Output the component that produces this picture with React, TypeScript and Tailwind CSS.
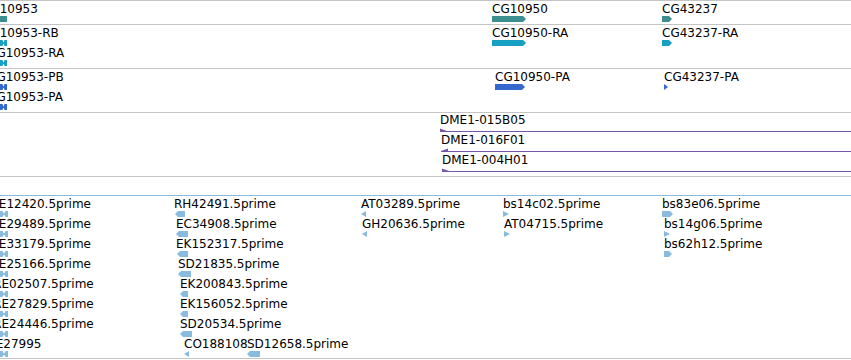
import React from 'react';

type Shape = 'block' | 'right' | 'left' | 'bow' | 'triR' | 'triL';

type Feat = {
    label: string;
    x: number; // bar start
    w: number; // bar width
    row: number;
    shape: Shape;
    lx?: number; // label start when it differs from the bar
};

const PAGE_W = 851;

const Glyph = ({ shape, w, color }: { shape: Shape; w: number; color: string }) => {
    const h = 6;
    const m = h / 2;
    if (shape === 'bow') {
        return (
            <svg width={w} height={h} className="block">
                <polygon points={`0,0 2.5,0 ${w / 2},${m} 2.5,${h} 0,${h}`} fill={color} />
                <polygon points={`${w},0 ${w - 2.5},0 ${w / 2},${m} ${w - 2.5},${h} ${w},${h}`} fill={color} />
                <rect x={0} y={m - 0.5} width={w} height={1.5} fill={color} />
            </svg>
        );
    }
    let pts = `0,0 ${w},0 ${w},${h} 0,${h}`;
    if (shape === 'right') pts = `0,0 ${w - 3},0 ${w},${m} ${w - 3},${h} 0,${h}`;
    if (shape === 'left') pts = `3,0 ${w},0 ${w},${h} 3,${h} 0,${m}`;
    if (shape === 'triR') pts = `0,0 ${w},${m} 0,${h}`;
    if (shape === 'triL') pts = `${w},0 0,${m} ${w},${h}`;
    return (
        <svg width={w} height={h} className="block">
            <polygon points={pts} fill={color} />
        </svg>
    );
};

// features sit at their genomic x inside a 20px row
const FeatureTrack = ({ feats, color, height, rows, gapCls = 'mt-0', border = 'border-[#c4c4c4]' }: {
    feats: Feat[];
    color: string;
    height: string;
    rows: number;
    gapCls?: string;
    border?: string;
}) => (
    <div className={`flex flex-col overflow-hidden border-t pt-px ${border} ${height}`}>
        {Array.from({ length: rows }, (_, r) => (
            <div key={r} className="relative h-[20px] shrink-0">
                {feats.filter((f) => f.row === r).map((f, i) => (
                    <div key={i} className="absolute top-0 flex flex-col items-start" style={{ left: f.x }}>
                        <span
                            className="whitespace-nowrap text-[12px] leading-[14px] text-black"
                            style={{ marginLeft: (f.lx ?? f.x) - f.x }}
                        >
                            {f.label}
                        </span>
                        <div className={gapCls}>
                            <Glyph shape={f.shape} w={f.w} color={color} />
                        </div>
                    </div>
                ))}
            </div>
        ))}
    </div>
);

const genes: Feat[] = [
    { label: 'CG10953', x: 0, w: 7, row: 0, shape: 'block', lx: -18 },
    { label: 'CG10950', x: 492, w: 34, row: 0, shape: 'right' },
    { label: 'CG43237', x: 662, w: 10, row: 0, shape: 'right' },
];

const transcripts: Feat[] = [
    { label: 'CG10953-RB', x: 0, w: 7, row: 0, shape: 'bow', lx: -18 },
    { label: 'CG10953-RA', x: 0, w: 7, row: 1, shape: 'bow', lx: -12 },
    { label: 'CG10950-RA', x: 492, w: 34, row: 0, shape: 'right' },
    { label: 'CG43237-RA', x: 662, w: 10, row: 0, shape: 'right' },
];

const proteins: Feat[] = [
    { label: 'CG10953-PB', x: 0, w: 7, row: 0, shape: 'bow', lx: -12 },
    { label: 'CG10953-PA', x: 0, w: 7, row: 1, shape: 'bow', lx: -12 },
    { label: 'CG10950-PA', x: 495, w: 30, row: 0, shape: 'right' },
    { label: 'CG43237-PA', x: 664, w: 4, row: 0, shape: 'triR' },
];

const clones = [
    { label: 'DME1-015B05', x: 440, dir: 'r' },
    { label: 'DME1-016F01', x: 441, dir: 'l' },
    { label: 'DME1-004H01', x: 442, dir: 'r' },
];

const ests: Feat[] = [
    { label: 'RE12420.5prime', x: 0, w: 8, row: 0, shape: 'bow', lx: -9.5 },
    { label: 'RE29489.5prime', x: 0, w: 8, row: 1, shape: 'bow', lx: -9.5 },
    { label: 'RE33179.5prime', x: 0, w: 8, row: 2, shape: 'bow', lx: -9.5 },
    { label: 'RE25166.5prime', x: 0, w: 8, row: 3, shape: 'bow', lx: -9.5 },
    { label: 'RE02507.5prime', x: 0, w: 8, row: 4, shape: 'bow', lx: -6.8 },
    { label: 'RE27829.5prime', x: 0, w: 8, row: 5, shape: 'bow', lx: -6.8 },
    { label: 'RE24446.5prime', x: 0, w: 8, row: 6, shape: 'bow', lx: -6.8 },
    { label: 'RE27995', x: 0, w: 8, row: 7, shape: 'bow', lx: -12.6 },

    { label: 'RH42491.5prime', x: 175, w: 10, row: 0, shape: 'left', lx: 174 },
    { label: 'EC34908.5prime', x: 176, w: 12, row: 1, shape: 'left' },
    { label: 'EK152317.5prime', x: 177, w: 11, row: 2, shape: 'left', lx: 176 },
    { label: 'SD21835.5prime', x: 178, w: 13, row: 3, shape: 'left' },
    { label: 'EK200843.5prime', x: 180, w: 8, row: 4, shape: 'left' },
    { label: 'EK156052.5prime', x: 180, w: 8, row: 5, shape: 'left' },
    { label: 'SD20534.5prime', x: 180, w: 12, row: 6, shape: 'left' },
    { label: 'CO188108', x: 184, w: 5, row: 7, shape: 'triL' },
    { label: 'SD12658.5prime', x: 247, w: 13, row: 7, shape: 'left' },

    { label: 'AT03289.5prime', x: 361, w: 5, row: 0, shape: 'triL' },
    { label: 'GH20636.5prime', x: 362, w: 5, row: 1, shape: 'triL' },

    { label: 'bs14c02.5prime', x: 503, w: 6, row: 0, shape: 'triR' },
    { label: 'AT04715.5prime', x: 504, w: 6, row: 1, shape: 'triR' },

    { label: 'bs83e06.5prime', x: 662, w: 11, row: 0, shape: 'right' },
    { label: 'bs14g06.5prime', x: 664, w: 6, row: 1, shape: 'triR' },
    { label: 'bs62h12.5prime', x: 664, w: 8, row: 2, shape: 'right' },
];

const CloneTrack = () => {
    const color = '#7656aa';
    return (
        <div className="flex h-[64px] flex-col overflow-hidden border-t border-[#c4c4c4]">
            {clones.map((c, i) => (
                <div key={i} className="relative h-[20px] shrink-0">
                    <div className="absolute top-0 flex flex-col" style={{ left: c.x }}>
                        <span className="whitespace-nowrap text-[12px] leading-[14px] text-black">{c.label}</span>
                        <svg className="mt-px block" width={PAGE_W - c.x} height={6}>
                            <rect x={0} y={3} width={PAGE_W - c.x} height={1} fill={color} />
                            {c.dir === 'r'
                                ? <polygon points="0,0.5 7,3 7,4 0,4" fill={color} />
                                : <polygon points="7,0.5 0,3 0,4 7,4" fill={color} />}
                        </svg>
                    </div>
                </div>
            ))}
        </div>
    );
};

export default function App() {
    return (
        <div className="h-[360px] w-[851px] overflow-hidden bg-white font-['DejaVu_Sans',sans-serif]">
            <FeatureTrack feats={genes} rows={1} color="#3d8e8e" height="h-[24px]" />
            <FeatureTrack feats={transcripts} rows={2} color="#18a0c2" height="h-[44px]" />
            <FeatureTrack feats={proteins} rows={2} color="#3468cc" height="h-[44px]" />
            <CloneTrack />
            <div className="h-[19px] border-t border-[#c4c4c4]" />
            <FeatureTrack
                feats={ests}
                rows={8}
                color="#88bbde"
                height="h-[163px]"
                border="border-[#88bbde]"
            />
            <div className="h-[2px] border-t border-[#c4c4c4]" />
        </div>
    );
}
